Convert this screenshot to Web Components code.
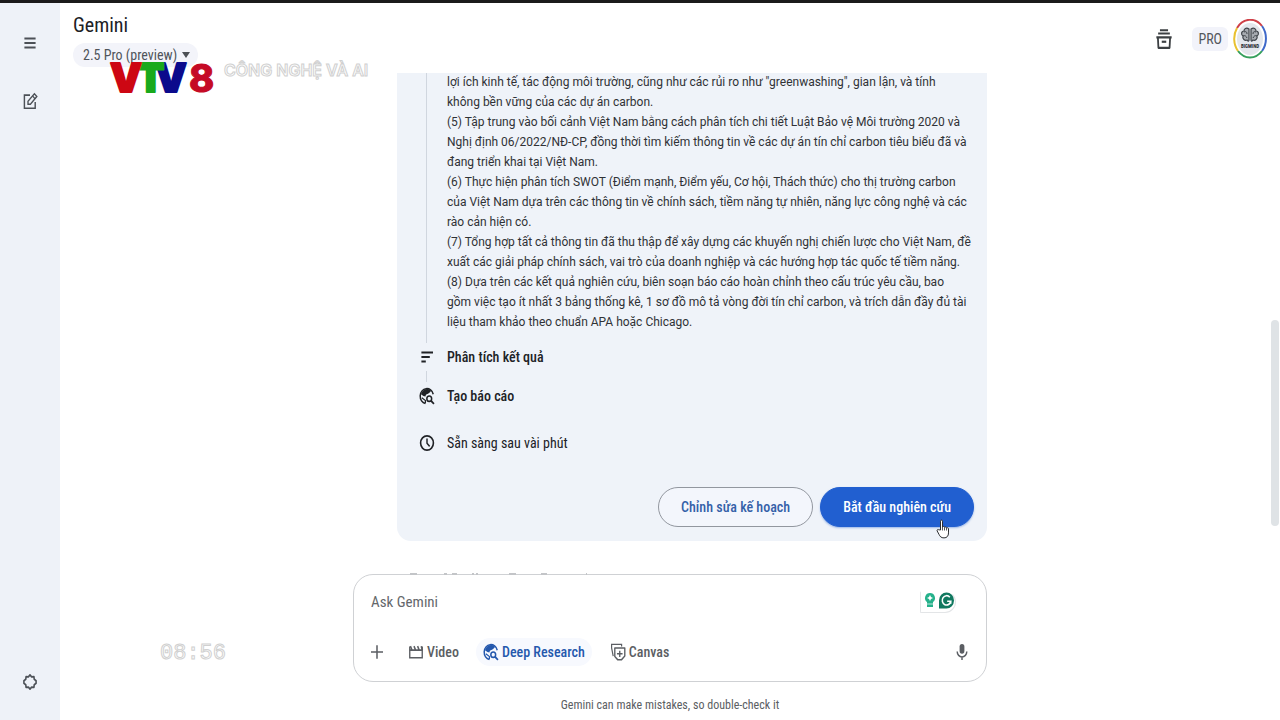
<!DOCTYPE html>
<html lang="vi">
<head>
<meta charset="utf-8">
<meta name="viewport" content="width=device-width, initial-scale=1">
<title>Gemini</title>
<style>
  html, body { height: 100%; }
  body {
    margin: 0;
    font-family: "Roboto Condensed", Roboto, "Liberation Sans", sans-serif;
    font-size: 14px;
    color: #303236;
    background: #fff;
  }
</style>
</head>
<body>
<gemini-app>
  <side-bar slot="side"></side-bar>
  <top-header slot="header"></top-header>
  <plan-card slot="chat">
    <p>lợi ích kinh tế, tác động môi trường, cũng như các rủi ro như "greenwashing", gian lận, và tính<br>không bền vững của các dự án carbon.</p>
    <p>(5) Tập trung vào bối cảnh Việt Nam bằng cách phân tích chi tiết Luật Bảo vệ Môi trường 2020 và<br>Nghị định 06/2022/NĐ-CP, đồng thời tìm kiếm thông tin về các dự án tín chỉ carbon tiêu biểu đã và<br>đang triển khai tại Việt Nam.</p>
    <p>(6) Thực hiện phân tích SWOT (Điểm mạnh, Điểm yếu, Cơ hội, Thách thức) cho thị trường carbon<br>của Việt Nam dựa trên các thông tin về chính sách, tiềm năng tự nhiên, năng lực công nghệ và các<br>rào cản hiện có.</p>
    <p>(7) Tổng hợp tất cả thông tin đã thu thập để xây dựng các khuyến nghị chiến lược cho Việt Nam, đề<br>xuất các giải pháp chính sách, vai trò của doanh nghiệp và các hướng hợp tác quốc tế tiềm năng.</p>
    <p>(8) Dựa trên các kết quả nghiên cứu, biên soạn báo cáo hoàn chỉnh theo cấu trúc yêu cầu, bao<br>gồm việc tạo ít nhất 3 bảng thống kê, 1 sơ đồ mô tả vòng đời tín chỉ carbon, và trích dẫn đầy đủ tài<br>liệu tham khảo theo chuẩn APA hoặc Chicago.</p>
  </plan-card>
  <prompt-box slot="prompt"></prompt-box>
  <tv-overlay slot="overlay"></tv-overlay>
</gemini-app>

<script>
// Icon set shared by the components
const ICONS = {
  menu: '<path d="M3 5h14M3 10h14M3 15h14" fill="none" stroke="currentColor" stroke-width="2.1"/>',
  edit: '<path d="M10 3.500H3v14.500h13.500V11" fill="none" stroke="currentColor" stroke-width="1.8"/><path d="M7.500 13.500v-3.200L15.500 2l3 3-8 8.500z" fill="none" stroke="currentColor" stroke-width="1.7"/><path d="M13.200 4.300l3 3.200" stroke="currentColor" stroke-width="1.6"/>',
  gear: '<path d="M10 2.200l2 2.100 2.900-.3.400 3 2.300 1.700v2.600l-2.300 1.700-.4 3-2.900-.3-2 2.100-2-2.100-2.900.3-.4-3-2.300-1.700V8.700L4.700 7l.4-3 2.900.3z" fill="none" stroke="currentColor" stroke-width="2" stroke-linejoin="round"/>',
  notes: '<path d="M3 5h14.500M3 10h10.500M3 15h5.500" fill="none" stroke="currentColor" stroke-width="2.2"/>',
  research: '<path d="M17.800 8A8.300 8.300 0 1 0 8 18.300" fill="none" stroke="currentColor" stroke-width="1.9"/><path d="M3 6.500C5 2.500 11 .5 15 4c-.5 2.500-2.500 2-3.500 3.500-2 .5-3 .5-3.500 3L5.500 10 2.500 8z" fill="currentColor"/><path d="M3.500 12l4.500 3v3" fill="none" stroke="currentColor" stroke-width="1.5"/><circle cx="12.800" cy="13" r="3" fill="none" stroke="currentColor" stroke-width="1.9"/><path d="M15 15.300l3.700 3.500" stroke="currentColor" stroke-width="2.1"/>',
  clock: '<circle cx="10" cy="10" r="8" fill="none" stroke="currentColor" stroke-width="2"/><path d="M10 5v5.300l3.300 3.400" fill="none" stroke="currentColor" stroke-width="1.8"/>',
  plus: '<path d="M10 2.500v15M2.500 10h15" fill="none" stroke="currentColor" stroke-width="1.9"/>',
  video: '<path d="M2.200 4v12.500h15.600V4" fill="none" stroke="currentColor" stroke-width="1.7"/><path d="M2 8h16M3 3.500L5 8M7.500 3.500l2 4.500M12 3.500L14 8M16.500 3.500L18 8" fill="none" stroke="currentColor" stroke-width="1.9"/>',
  canvas: '<path d="M4 14.500l-2-9v-4h12.500V4" fill="none" stroke="currentColor" stroke-width="1.5"/><path d="M6 5.500h12.500v9l-4 4H9.500L6 15z" fill="none" stroke="currentColor" stroke-width="1.7" stroke-linejoin="round"/><path d="M12.200 8.500v7M8.700 12h7" stroke="currentColor" stroke-width="1.7"/>',
  mic: '<rect x="7" y="1" width="6" height="11" rx="3" fill="currentColor"/><path d="M4 9.500a6 6 0 0 0 12 0M10 15.500V19" fill="none" stroke="currentColor" stroke-width="1.8"/>',
  bin: '<path d="M5.500 2h9M3.500 5h13" fill="none" stroke="currentColor" stroke-width="1.7"/><path d="M1.500 8.500h17M3.200 8.500l.6 9.500h12.400l.6-9.500" fill="none" stroke="currentColor" stroke-width="2" stroke-linejoin="round"/><path d="M7.500 12.500h5" stroke="currentColor" stroke-width="2"/>'
};

// <ui-icon name="menu">: size comes from --w and --h
class UiIcon extends HTMLElement {
  connectedCallback() {
    this.attachShadow({ mode: 'open' }).innerHTML = `
      <style>
        :host { display: inline-flex; flex: none; width: var(--w, 16px); height: var(--h, 18px); }
        svg { width: 100%; height: 100%; }
      </style>
      <svg viewBox="0 0 20 20" preserveAspectRatio="none" aria-hidden="true">${ICONS[this.getAttribute('name')]}</svg>`;
  }
}
customElements.define('ui-icon', UiIcon);

// Page frame: side bar, header, chat and prompt
class GeminiApp extends HTMLElement {
  constructor() {
    super();
    this.attachShadow({ mode: 'open' }).innerHTML = `
      <style>
        :host {
          display: flex;
          box-sizing: border-box;
          height: 100vh;
          border-top: 3px solid #1b1b1b;
          overflow: hidden;
          position: relative;
        }
        main { flex: 1; min-width: 0; display: flex; flex-direction: column; }
        .chat {
          flex: 1;
          min-height: 0;
          display: flex;
          flex-direction: column;
          justify-content: flex-end;
          overflow: hidden;
        }
        .column { width: 634px; max-width: 100%; margin: 0 auto; }
        .chat .column { box-sizing: border-box; padding: 0 0 33px 44px; }
        .thumb {
          position: absolute;
          right: 1px;
          top: 317px;
          width: 8px;
          height: 206px;
          border-radius: 4px;
          background: #dfe3e6;
        }
      </style>
      <slot name="side"></slot>
      <main>
        <slot name="header"></slot>
        <div class="chat"><div class="column"><slot name="chat"></slot></div></div>
        <div class="column"><slot name="prompt"></slot></div>
      </main>
      <div class="thumb"></div>
      <slot name="overlay"></slot>`;
  }
}
customElements.define('gemini-app', GeminiApp);

class SideBar extends HTMLElement {
  constructor() {
    super();
    this.attachShadow({ mode: 'open' }).innerHTML = `
      <style>
        :host {
          display: flex;
          flex-direction: column;
          align-items: center;
          flex: none;
          box-sizing: border-box;
          width: 60px;
          padding: 28px 0 26px;
          gap: 34px;
          background: #eef2f8;
          color: #4c5157;
        }
        button {
          display: flex;
          align-items: center;
          justify-content: center;
          width: 24px;
          height: 24px;
          padding: 0;
          border: 0;
          background: none;
          color: inherit;
        }
        button:last-child { margin-top: auto; }
      </style>
      <button aria-label="Menu"><ui-icon name="menu"></ui-icon></button>
      <button aria-label="New chat"><ui-icon name="edit"></ui-icon></button>
      <button aria-label="Settings"><ui-icon name="gear"></ui-icon></button>`;
  }
}
customElements.define('side-bar', SideBar);

class TopHeader extends HTMLElement {
  constructor() {
    super();
    this.attachShadow({ mode: 'open' }).innerHTML = `
      <style>
        :host {
          display: flex;
          justify-content: space-between;
          align-items: flex-start;
          flex: none;
          box-sizing: border-box;
          height: 70px;
          padding: 10px 13px 0 13px;
        }
        h1 { margin: 0; font-size: 20px; line-height: 24px; font-weight: 400; color: #202124; }
        .model {
          display: flex;
          align-items: center;
          margin-top: 6px;
          padding: 0 8px 0 10px;
          border-radius: 12px;
          background: #f3f4fa;
          color: #50545a;
        }
        select {
          appearance: none;
          padding: 0;
          border: 0;
          background: none;
          font: inherit;
          line-height: 24px;
          height: 24px;
          color: inherit;
        }
        .model svg { margin-left: 4px; }
        .right { display: flex; align-items: center; height: 40px; margin-top: 6px; }
        button { display: flex; padding: 0; border: 0; background: none; color: #3c4043; --w: 18px; --h: 22px; }
        .pro {
          margin: 0 5px 0 19px;
          padding: 0 6px;
          border-radius: 6px;
          background: #f2f3fa;
          line-height: 24px;
          color: #54575c;
        }
      </style>
      <div>
        <h1>Gemini</h1>
        <label class="model">
          <select aria-label="Model"><option>2.5 Pro (preview)</option></select>
          <svg width="8" height="6" viewBox="0 0 8 6"><path d="M0 0h8L4 6z" fill="#4c5055"/></svg>
        </label>
      </div>
      <div class="right">
        <button aria-label="Activity"><ui-icon name="bin"></ui-icon></button>
        <span class="pro">PRO</span>
        <svg width="34" height="40" viewBox="0 0 34 40" role="img" aria-label="Account">
          <ellipse cx="17" cy="20" rx="13" ry="16" fill="#e4e7ec"/>
          <g fill="none" stroke-width="2">
            <path d="M4 9A16 19 0 0 1 29 7" stroke="#cf4048"/>
            <path d="M29 7A16 19 0 0 1 29 32" stroke="#3f69c9"/>
            <path d="M29 32A16 19 0 0 1 5 32" stroke="#36a05c"/>
            <path d="M5 32A16 19 0 0 1 4 9" stroke="#e9c12f"/>
          </g>
          <path d="M16 10c-3-2-5 0-5 2-3 0-3 4-1 5-1 3 2 5 4 4 1 2 2 1 2 0zM18 10c3-2 5 0 5 2 3 0 3 4 1 5 1 3-2 5-4 4-1 2-2 1-2 0z" fill="#a7abb1" stroke="#3e4349" stroke-width="1.2"/>
          <path d="M11 13c2-1 3 0 3 2M10 17c2-1 3 0 4 2M23 13c-2-1-3 0-3 2M24 17c-2-1-3 0-4 2" fill="none" stroke="#3e4349"/>
          <text x="17" y="29" text-anchor="middle" font-size="5" font-weight="700" fill="#25282c">BIGMIND</text>
        </svg>
      </div>`;
  }
}
customElements.define('top-header', TopHeader);

// Research plan, the steps come in through the slot
class PlanCard extends HTMLElement {
  constructor() {
    super();
    this.attachShadow({ mode: 'open' }).innerHTML = `
      <style>
        :host {
          display: block;
          padding: 0 13px 14px 22px;
          border-radius: 0 0 14px 14px;
          background: #eff3f9;
        }
        .steps {
          margin-left: 7px;
          padding: 0 0 11px 20px;
          border-left: 1px solid #d0d6df;
          font-family: Roboto, "Liberation Sans", sans-serif;
          font-size: 12px;
          white-space: nowrap;
        }
        ::slotted(p) { margin: 0; line-height: 20px; }
        .row { display: flex; align-items: center; gap: 12px; line-height: 20px; color: #202226; }
        .title { font-weight: 500; }
        .first { margin-top: 4px; }
        .link { width: 1px; height: 11px; margin: 4px 0 4px 7px; background: #d0d6df; }
        .time { margin-top: 27px; }
        .actions { display: flex; justify-content: flex-end; gap: 7px; margin-top: 34px; }
        button {
          height: 40px;
          padding: 0 22px;
          border: 1px solid #92979f;
          border-radius: 20px;
          background: #f3f6fc;
          font: inherit;
          font-weight: 500;
          color: #3460a8;
        }
        .primary { background: #215fd0; border-color: #215fd0; color: #fff; box-shadow: 0 1px 2px #215fd066; }
        .hold { position: relative; display: flex; }
        .hand { position: absolute; right: 24px; bottom: -12px; }
      </style>
      <div class="steps"><slot></slot></div>
      <div class="row title first"><ui-icon name="notes"></ui-icon><span>Phân tích kết quả</span></div>
      <div class="link"></div>
      <div class="row title"><ui-icon name="research"></ui-icon><span>Tạo báo cáo</span></div>
      <div class="row time"><ui-icon name="clock"></ui-icon><span>Sẵn sàng sau vài phút</span></div>
      <div class="actions">
        <button>Chỉnh sửa kế hoạch</button>
        <div class="hold">
          <button class="primary">Bắt đầu nghiên cứu</button>
          <svg class="hand" width="14" height="20" viewBox="0 0 14 20">
            <path d="M4.500 11V2.200c0-1.500 2-1.500 2 0V8c.5-.8 2-.6 2 .3.6-.6 2-.3 2 .6.7-.5 2-.1 2 1v4c0 3-1.500 5-4.500 5-3 0-4-1.500-5-3.500L1.200 12c-.6-1.200.8-2 1.600-1.200z" fill="#fff" stroke="#2b2d31"/>
            <path d="M6.500 8v3.500M8.500 8.500v3M10.500 9v2.500" stroke="#2b2d31" stroke-width=".8"/>
          </svg>
        </div>
      </div>`;
  }
}
customElements.define('plan-card', PlanCard);

class PromptBox extends HTMLElement {
  constructor() {
    super();
    this.attachShadow({ mode: 'open' }).innerHTML = `
      <style>
        :host { display: block; color: #5b5e63; }
        .box {
          position: relative;
          box-sizing: border-box;
          height: 108px;
          display: flex;
          flex-direction: column;
          justify-content: space-between;
          padding: 15px 16px 15px 15px;
          border: 1px solid #cfd1d4;
          border-radius: 20px;
          background: #fff;
        }
        .line { display: flex; align-items: center; }
        input {
          flex: 1;
          min-width: 0;
          padding: 0 0 0 2px;
          border: 0;
          outline: 0;
          background: none;
          font: inherit;
          font-size: 15px;
          line-height: 24px;
        }
        input::placeholder { color: #64676b; opacity: 1; }
        .writer {
          display: flex;
          align-items: center;
          gap: 3px;
          margin-right: 14px;
          padding: 0 1px 3px 3px;
          border: 1px solid #e3e5e7;
          border-top-color: transparent;
          border-radius: 2px 12px 12px 2px;
        }
        button {
          display: flex;
          align-items: center;
          gap: 3px;
          height: 28px;
          padding: 0;
          border: 0;
          background: none;
          font: inherit;
          font-weight: 500;
          color: inherit;
        }
        .video { margin-left: 23px; }
        .deep { margin-left: 17px; padding: 0 7px; border-radius: 14px; background: #f7f9fe; color: #2458ad; }
        .canvas { margin-left: 18px; }
        .mic { margin-left: auto; }
        .foot { margin: 14px 0 6px; font-size: 12px; line-height: 18px; text-align: center; }
        /* tops of the message that scrolls away under the box */
        .peek { position: absolute; left: 55px; top: -2px; }
      </style>
      <div class="box">
        <svg class="peek" width="180" height="3" viewBox="0 0 180 3"><path d="M1 1h7M35 1h3M43 1h5M63 1h2M67 1h2M100 1h7M132 1h6M177 1h1" stroke="#c3c5c8" stroke-width="2"/></svg>
        <div class="line">
          <input type="text" placeholder="Ask Gemini" aria-label="Ask Gemini">
          <span class="writer">
            <svg width="12" height="17" viewBox="0 0 12 17"><path d="M6 1a5 5 0 0 0-3 9v5h6v-5a5 5 0 0 0-3-9z" fill="#25b18b"/><path d="M6 3l1 2 2 1-2 1-1 2-1-2-2-1 2-1z" fill="#fff"/><path d="M3 12h6" stroke="#fff" stroke-width=".7"/></svg>
            <svg width="15" height="17" viewBox="0 0 16 17"><path d="M8 0a8 8.500 0 1 1 0 17H0V8.500A8 8.500 0 0 1 8 0z" fill="#10785f"/><path d="M11.500 5A4.600 5 0 1 0 12.600 9.300H8.700M12.500 9v3" fill="none" stroke="#fff" stroke-width="1.7"/></svg>
          </span>
        </div>
        <div class="line">
          <button aria-label="Add"><ui-icon name="plus"></ui-icon></button>
          <button class="video"><ui-icon name="video"></ui-icon>Video</button>
          <button class="deep"><ui-icon name="research"></ui-icon>Deep Research</button>
          <button class="canvas"><ui-icon name="canvas"></ui-icon>Canvas</button>
          <button class="mic" aria-label="Microphone"><ui-icon name="mic"></ui-icon></button>
        </div>
      </div>
      <div class="foot">Gemini can make mistakes, so double-check it</div>`;
  }
}
customElements.define('prompt-box', PromptBox);

// Channel logo, programme name and clock, laid over the page
class TvOverlay extends HTMLElement {
  constructor() {
    super();
    this.attachShadow({ mode: 'open' }).innerHTML = `
      <style>
        :host { position: absolute; inset: 0; pointer-events: none; font-family: Inter, sans-serif; }
        .logo { position: absolute; left: 108px; top: 56px; }
        .name, .clock {
          position: absolute;
          line-height: 24px;
          color: #fff;
          -webkit-text-stroke: 1px #d0d0d0;
          white-space: nowrap;
        }
        .name { left: 224px; top: 55px; font-size: 16px; font-weight: 600; }
        .clock { left: 160px; top: 639px; font: 400 22px/24px "Liberation Mono", monospace; }
      </style>
      <svg class="logo" width="106" height="38" viewBox="0 0 106 38" font-size="40" font-weight="900" stroke-width="2" stroke-linejoin="round">
        <text x="47" y="33" fill="#0b0a8c" stroke="#0b0a8c">V</text>
        <text x="29" y="33" fill="#19a91c" stroke="#19a91c">T</text>
        <text x="2" y="33" fill="#cd0713" stroke="#cd0713">V</text>
        <text x="81" y="33" font-size="38" font-weight="800" stroke-width="1" fill="#c50a25" stroke="#c50a25">8</text>
      </svg>
      <div class="name">CÔNG NGHỆ VÀ AI</div>
      <div class="clock">08:56</div>`;
  }
}
customElements.define('tv-overlay', TvOverlay);
</script>
</body>
</html>
